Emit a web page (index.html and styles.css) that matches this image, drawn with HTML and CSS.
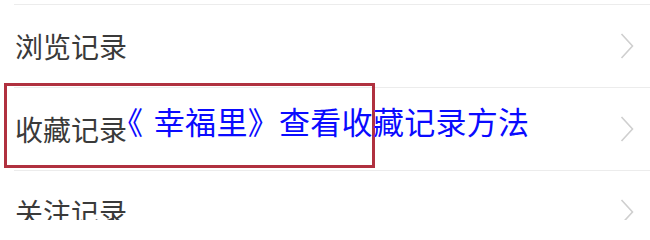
FILE: index.html
```html
<!DOCTYPE html>
<html lang="zh-CN">
<head>
<meta charset="utf-8">
<title>幸福里 查看收藏记录方法</title>
<link rel="stylesheet" href="styles.css">
</head>
<body>
<div class="list">
  <div class="item">
    <span class="label">浏览记录</span>
    <svg class="chev" width="14" height="26" viewBox="0 0 14 26"><polyline points="1.5,1 12.5,13 1.5,25" fill="none" stroke="#cfcfcf" stroke-width="1.6"/></svg>
  </div>
  <div class="item">
    <span class="label">收藏记录</span>
    <svg class="chev" width="14" height="26" viewBox="0 0 14 26"><polyline points="1.5,1 12.5,13 1.5,25" fill="none" stroke="#cfcfcf" stroke-width="1.6"/></svg>
  </div>
  <div class="item">
    <span class="label">关注记录</span>
    <svg class="chev" width="14" height="26" viewBox="0 0 14 26"><polyline points="1.5,1 12.5,13 1.5,25" fill="none" stroke="#cfcfcf" stroke-width="1.6"/></svg>
  </div>
</div>
<div class="mark"></div>
<div class="title"><span class="lq">《</span>幸福里》查看收藏记录方法</div>
</body>
</html>
```
FILE: styles.css
```css
html, body {
  margin: 0;
  padding: 0;
  background: #ffffff;
  width: 650px;
  height: 220px;
  overflow: hidden;
  position: relative;
  font-family: "Noto Sans CJK SC", "Noto Sans", sans-serif;
}
.list {
  box-sizing: border-box;
  height: 220px;
  overflow: hidden;
  padding-top: 4px;
  margin-left: 14px;
}
.item {
  box-sizing: border-box;
  height: 83px;
  border-top: 1px solid #ececec;
  display: flex;
  align-items: center;
  justify-content: space-between;
  padding-left: 1px;
  padding-right: 16px;
}
.label {
  font-size: 28px;
  line-height: 1;
  color: #3a3a3a;
}
.chev {
  display: block;
}
.mark {
  position: absolute;
  left: 4px;
  top: 83px;
  width: 371px;
  height: 85px;
  box-sizing: border-box;
  border: 3px solid #b0313f;
}
.title {
  position: absolute;
  left: 127px;
  top: 105px;
  font-size: 31px;
  line-height: 1;
  letter-spacing: 0.3px;
  color: #0a0aff;
  white-space: nowrap;
}
.lq {
  font-feature-settings: "palt";
  margin-right: 11px;
}
```
